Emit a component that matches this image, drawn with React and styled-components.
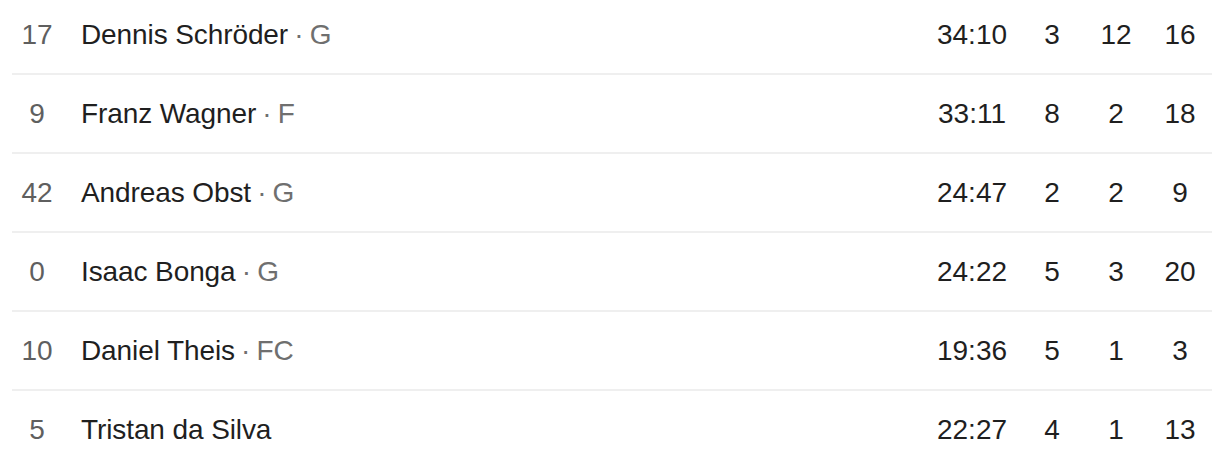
import React from 'react';
import styled, { createGlobalStyle } from 'styled-components';

const players = [
    { num: '17', name: 'Dennis Schröder', pos: 'G', min: '34:10', reb: 3, ast: 12, pts: 16 },
    { num: '9', name: 'Franz Wagner', pos: 'F', min: '33:11', reb: 8, ast: 2, pts: 18 },
    { num: '42', name: 'Andreas Obst', pos: 'G', min: '24:47', reb: 2, ast: 2, pts: 9 },
    { num: '0', name: 'Isaac Bonga', pos: 'G', min: '24:22', reb: 5, ast: 3, pts: 20 },
    { num: '10', name: 'Daniel Theis', pos: 'FC', min: '19:36', reb: 5, ast: 1, pts: 3 },
    { num: '5', name: 'Tristan da Silva', pos: '', min: '22:27', reb: 4, ast: 1, pts: 13 },
];

const App = () => {
    return (
        <>
            <GlobalStyle />
            <Table>
                {players.map((p, i) => (
                    <Row key={p.num} last={i === players.length - 1}>
                        <Num>{p.num}</Num>
                        <Name>
                            {p.name}
                            {p.pos && <Pos> · {p.pos}</Pos>}
                        </Name>
                        <Stat>{p.min}</Stat>
                        <Stat>{p.reb}</Stat>
                        <Stat>{p.ast}</Stat>
                        <Stat>{p.pts}</Stat>
                    </Row>
                ))}
            </Table>
        </>
    )
}

export default App

const GlobalStyle = createGlobalStyle`
    body {
        margin: 0;
        background: #fff;
        font-family: "Liberation Sans", Arial, sans-serif;
        overflow: hidden;
    }
`
const Table = styled.div`
    margin: -4px 8px 0 12px;
`
const Row = styled.div`
    display: grid;
    grid-template-columns: 50px 1fr 96px 64px 64px 64px;
    align-items: center;
    height: 77px;
    border-bottom: 2px solid ${ props => props.last ? 'transparent' : '#efefef' };
    font-size: 28px;
    color: #1f1f1f;
`
const Num = styled.div`
    text-align: center;
    color: #5f5f5f;
`
const Name = styled.div`
    padding-left: 19px;
    white-space: nowrap;
    letter-spacing: -0.1px;
`
const Pos = styled.span`
    color: #6f6f6f;
    word-spacing: -1.5px;
`
const Stat = styled.div`
    text-align: center;
    white-space: nowrap;
`
